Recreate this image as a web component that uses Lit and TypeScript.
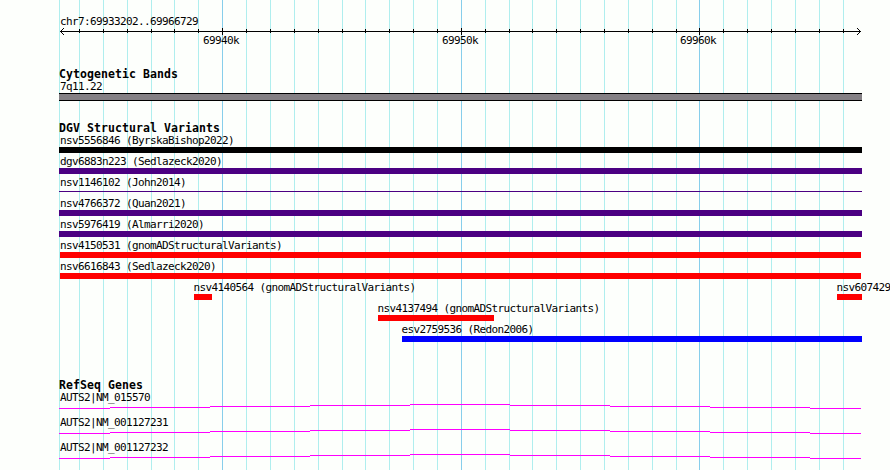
import { LitElement, html, css, svg } from 'lit';
import { customElement, property } from 'lit/decorators.js';
import { classMap } from 'lit/directives/class-map.js';
import { styleMap } from 'lit/directives/style-map.js';

// The panel starts at this x, every position below is an x on the page
const LEFT = 59;
const WIDTH = 803;

const GRID = [
  59, 79, 103, 127, 151, 174, 198, 222, 246, 270, 294, 318, 342, 365, 389, 413, 437, 461,
  485, 509, 532, 556, 580, 604, 628, 652, 676, 699, 723, 747, 771, 795, 819, 843,
];

const MAJOR = new Map([
  [222, '69940k'],
  [461, '69950k'],
  [699, '69960k'],
]);

interface Feature {
  label: string;
  start: number;
  end: number;
  color: string;
  thin?: boolean;
}

// Features that share a row sit in the same inner list
const VARIANTS: Feature[][] = [
  [{ label: 'nsv5556846 (ByrskaBishop2022)', start: 59, end: 862, color: '#000000' }],
  [{ label: 'dgv6883n223 (Sedlazeck2020)', start: 59, end: 862, color: '#4b0082' }],
  [{ label: 'nsv1146102 (John2014)', start: 59, end: 862, color: '#4b0082', thin: true }],
  [{ label: 'nsv4766372 (Quan2021)', start: 59, end: 862, color: '#4b0082' }],
  [{ label: 'nsv5976419 (Almarri2020)', start: 59, end: 862, color: '#4b0082' }],
  [{ label: 'nsv4150531 (gnomADStructuralVariants)', start: 60, end: 861, color: '#ff0000' }],
  [{ label: 'nsv6616843 (Sedlazeck2020)', start: 60, end: 861, color: '#ff0000' }],
  [
    { label: 'nsv4140564 (gnomADStructuralVariants)', start: 194, end: 212, color: '#ff0000' },
    { label: 'nsv607429', start: 837, end: 862, color: '#ff0000' },
  ],
  [{ label: 'nsv4137494 (gnomADStructuralVariants)', start: 378, end: 494, color: '#ff0000' }],
  [{ label: 'esv2759536 (Redon2006)', start: 402, end: 862, color: '#0000ff' }],
];

const GENES = ['AUTS2|NM_015570', 'AUTS2|NM_001127231', 'AUTS2|NM_001127232'];

@customElement('scale-ruler')
export class ScaleRuler extends LitElement {
  static styles = css`
    :host {
      display: block;
    }
    svg {
      display: block;
      overflow: visible;
    }
    path {
      fill: none;
      stroke: #000;
    }
    text {
      font: 11px 'DejaVu Sans Mono', monospace;
      letter-spacing: -0.622px;
      fill: #000;
    }
  `;

  render() {
    return html`
      <svg width=${WIDTH} height="20" shape-rendering="crispEdges">
        <path d="M1 5.5H802" />
        <path d="M1 5.5h1M2 4.5h1M3 3.5h1M4 2.5h1M2 6.5h1M3 7.5h1M4 8.5h1" />
        <path d="M801 5.5h1M800 4.5h1M799 3.5h1M798 2.5h1M800 6.5h1M799 7.5h1M798 8.5h1" />
        ${GRID.slice(1).map((x) => this.renderTick(x))}
      </svg>
    `;
  }

  renderTick(x: number) {
    const at = x - LEFT;
    const label = MAJOR.get(x);
    return label
      ? svg`
          <path d="M${at + 0.5} 2v7" />
          <text x=${at - 19} y="18">${label}</text>
        `
      : svg`<path d="M${at + 0.5} 3v4" />`;
  }
}

@customElement('feature-row')
export class FeatureRow extends LitElement {
  @property({ attribute: false }) features: Feature[] = [];

  static styles = css`
    :host {
      display: grid;
      height: 21px;
    }
    .feature {
      grid-area: 1 / 1;
      white-space: nowrap;
    }
    .label {
      height: 12px;
      line-height: 11px;
    }
    .label.edge {
      padding-left: 1px;
    }
    .label.inset {
      margin-left: -0.5px;
    }
    .bar {
      height: 6px;
    }
    .bar.thin {
      height: 1px;
      margin-top: 2px;
    }
  `;

  render() {
    return this.features.map(
      (f) => html`
        <div class="feature" style=${styleMap({ marginLeft: `${f.start - LEFT}px` })}>
          <div class=${classMap({ label: true, edge: f.start === LEFT, inset: f.start > LEFT + 1 })}>
            ${f.label}
          </div>
          <div
            class=${classMap({ bar: true, thin: !!f.thin })}
            style=${styleMap({ width: `${f.end - f.start}px`, background: f.color })}
          ></div>
        </div>
      `,
    );
  }
}

@customElement('gene-row')
export class GeneRow extends LitElement {
  @property() name = '';

  static styles = css`
    :host {
      display: block;
      height: 25px;
    }
    .label {
      height: 12px;
      line-height: 11px;
      padding-left: 1px;
    }
    svg {
      display: block;
    }
    path {
      fill: none;
      stroke: #ff00ff;
    }
  `;

  render() {
    return html`
      <div class="label">${this.name}</div>
      <svg width=${WIDTH} height="8" shape-rendering="crispEdges">
        <path
          d="M0 4.5H51M51 3.5H151M151 2.5H251M251 1.5H351M351 .5H451M451 1.5H551M551 2.5H651M651 3.5H751M751 4.5H802"
        />
      </svg>
    `;
  }
}

@customElement('app-root')
export class AppRoot extends LitElement {
  static styles = css`
    :host {
      display: block;
      position: relative;
      width: 890px;
      height: 470px;
      overflow: hidden;
      background: #fdfffc;
      color: #000;
      font: 11px 'DejaVu Sans Mono', monospace;
      letter-spacing: -0.622px;
    }
    .grid {
      position: absolute;
      inset: 0;
      fill: none;
      stroke: #afeeee;
    }
    .grid .major {
      stroke: #87ceeb;
    }
    .tracks {
      position: relative;
      box-sizing: border-box;
      padding: 16px 0 0 59px;
      display: flex;
      flex-direction: column;
    }
    .region {
      height: 10px;
      line-height: 11px;
      padding-left: 1px;
    }
    .cytoband {
      margin-top: 22px;
    }
    h2 {
      margin: 0;
      height: 13px;
      line-height: 13px;
      font-size: 11.5px;
      font-weight: bold;
      letter-spacing: 0.077px;
    }
    .band-label {
      height: 12px;
      line-height: 11px;
      padding-left: 1px;
    }
    .band {
      box-sizing: border-box;
      width: 803px;
      height: 8px;
      border: solid #000;
      border-width: 1px 0;
      background: #848084;
    }
    .variants {
      margin-top: 21px;
    }
    .genes {
      margin-top: 34px;
    }
  `;

  render() {
    return html`
      <svg class="grid" width="890" height="470" shape-rendering="crispEdges">
        ${GRID.map((x) => svg`<path class=${MAJOR.has(x) ? 'major' : ''} d="M${x + 0.5} 0V470" />`)}
      </svg>
      <div class="tracks">
        <div class="region">chr7:69933202..69966729</div>
        <scale-ruler></scale-ruler>
        <section class="cytoband">
          <h2>Cytogenetic Bands</h2>
          <div class="band-label">7q11.22</div>
          <div class="band"></div>
        </section>
        <section class="variants">
          <h2>DGV Structural Variants</h2>
          ${VARIANTS.map((row) => html`<feature-row .features=${row}></feature-row>`)}
        </section>
        <section class="genes">
          <h2>RefSeq Genes</h2>
          ${GENES.map((name) => html`<gene-row .name=${name}></gene-row>`)}
        </section>
      </div>
    `;
  }
}
